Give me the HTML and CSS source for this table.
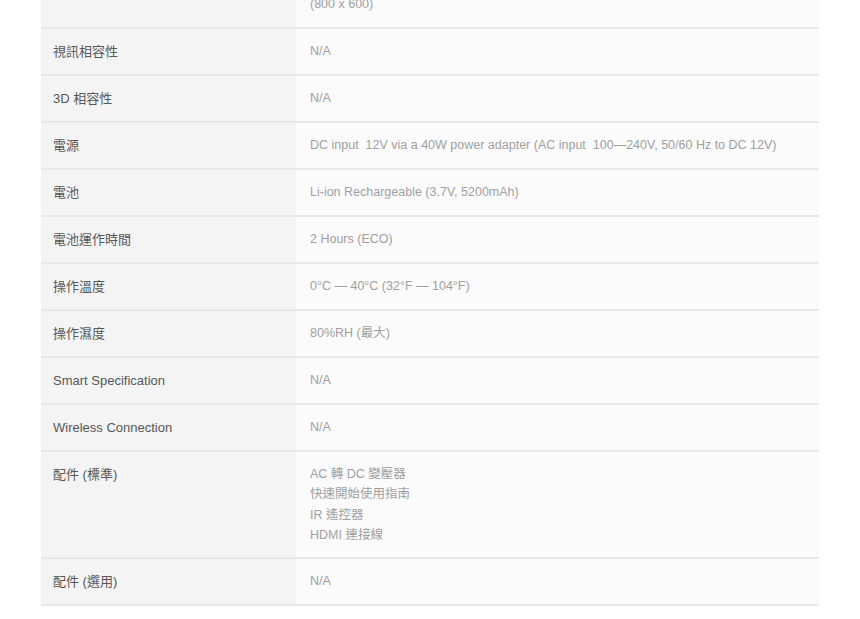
FILE: index.html
```html
<!DOCTYPE html>
<html lang="zh-Hant">
<head>
<meta charset="utf-8">
<link rel="stylesheet" href="styles.css">
</head>
<body>
<div class="page">
  <div class="spec">
    <div class="row first"><div class="label"></div><div class="value">(800 x 600)</div></div>
    <div class="row"><div class="label">視訊相容性</div><div class="value">N/A</div></div>
    <div class="row"><div class="label">3D 相容性</div><div class="value">N/A</div></div>
    <div class="row"><div class="label">電源</div><div class="value">DC input&nbsp; 12V via a 40W power adapter (AC input&nbsp; 100—240V, 50/60 Hz to DC 12V)</div></div>
    <div class="row"><div class="label">電池</div><div class="value">Li-ion Rechargeable (3.7V, 5200mAh)</div></div>
    <div class="row"><div class="label">電池運作時間</div><div class="value">2 Hours (ECO)</div></div>
    <div class="row"><div class="label">操作溫度</div><div class="value">0°C — 40°C (32°F — 104°F)</div></div>
    <div class="row"><div class="label">操作濕度</div><div class="value">80%RH (最大)</div></div>
    <div class="row"><div class="label">Smart Specification</div><div class="value">N/A</div></div>
    <div class="row"><div class="label">Wireless Connection</div><div class="value">N/A</div></div>
    <div class="row"><div class="label">配件 (標準)</div><div class="value multi">AC 轉 DC 變壓器<br>快速開始使用指南<br>IR 遙控器<br>HDMI 連接線</div></div>
    <div class="row"><div class="label">配件 (選用)</div><div class="value">N/A</div></div>
  </div>
</div>
</body>
</html>
```

FILE: styles.css
```css
html, body {
  margin: 0;
  padding: 0;
  background: #ffffff;
}
body {
  font-family: "Liberation Sans", "Noto Sans CJK TC", Arial, sans-serif;
  line-height: 21px;
}
.page {
  padding: 0 41px;
  overflow: hidden;
  height: 619px;
}
.spec {
  margin-top: -18px;
  width: 778px;
}
.row {
  display: grid;
  grid-template-columns: 255px 1fr;
  border-bottom: 2px solid #e8e8e8;
}
.label {
  background: #f4f4f4;
  color: #575757;
  font-size: 13px;
  padding: 12px;
}
.value {
  background: #fbfbfb;
  color: #a0a0a0;
  font-size: 12.5px;
  padding: 12px 14px;
}
.value.multi {
  line-height: 20.25px;
}
```
